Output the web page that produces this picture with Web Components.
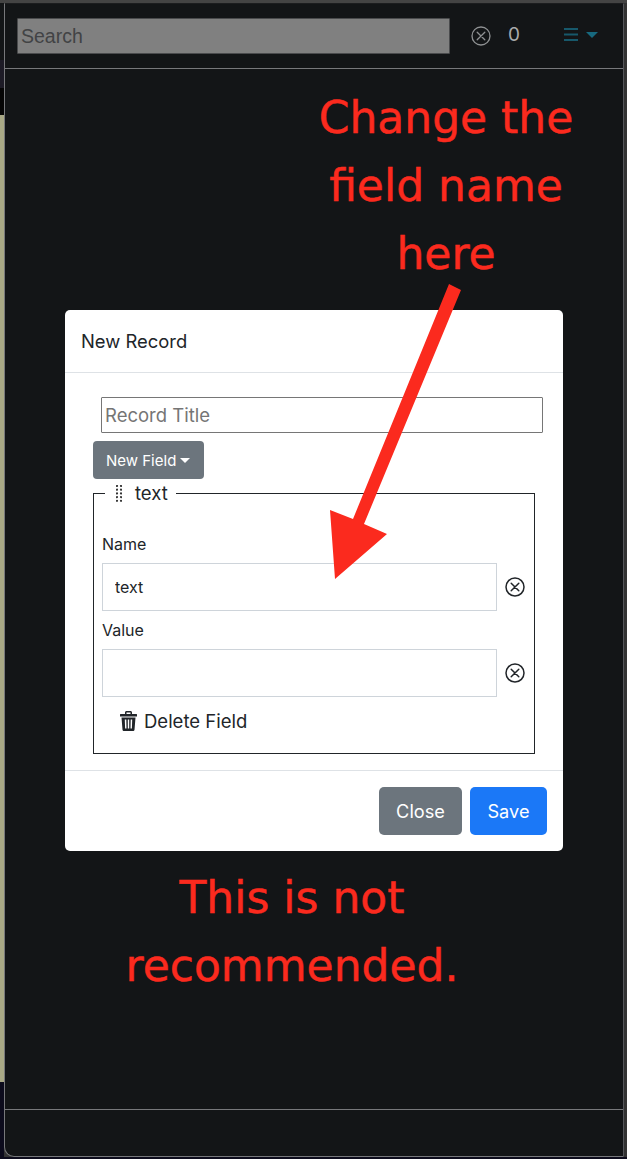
<!DOCTYPE html>
<html lang="en">
<head>
<meta charset="utf-8">
<title>New Record</title>
<style>
  html, body { margin: 0; height: 100%; background: #0c0b1c; }
  body { font-family: Inter, "Liberation Sans", sans-serif; overflow: hidden; }
</style>
</head>
<body>
<app-window>
  <search-bar slot="header"></search-bar>
  <record-modal slot="modal" heading="New Record">
    <field-box legend="text">
      <field-row label="Name" value="text"></field-row>
      <field-row label="Value"></field-row>
    </field-box>
  </record-modal>
  <red-note slot="notes" style="left:264px;top:84px;width:364px">Change the<br>field name<br>here</red-note>
  <red-note slot="notes" style="left:92px;top:864px;width:400px">This is not<br>recommended.</red-note>
  <red-arrow slot="notes"></red-arrow>
</app-window>

<script>
const closeIcon = (size, colour, width) => `
  <svg width="${size}" height="${size}" viewBox="0 0 20 20" fill="none" stroke="${colour}" stroke-width="${width}">
    <circle cx="10" cy="10" r="9"/>
    <path d="M6.2 6.2l7.6 7.6M13.8 6.2l-7.6 7.6" stroke-linecap="round"/>
  </svg>`;

class AppWindow extends HTMLElement {
  constructor() {
    super();
    this.attachShadow({ mode: 'open' }).innerHTML = `
      <style>
        :host { display: block; position: relative; height: 1159px; box-sizing: border-box; padding: 3px 3px 2px 4px;
          background:
            linear-gradient(#444 0 3px, transparent 3px),
            linear-gradient(to top, #0c0b1c 0 2px, transparent 2px),
            linear-gradient(#131517 0 60px, #1d1b26 60px 88px, #050505 88px 115px, #a9a986 115px 1082px, #0c0b1c 1082px) left / 4px 100% no-repeat,
            #333; }
        .frame { height: 100%; box-sizing: border-box; display: flex; flex-direction: column; background: #131517;
          border: 1px solid #77787b; border-top-color: #1c1d1f; border-right-color: #55565a; border-radius: 0 0 0 10px; }
        header { height: 64px; flex: none; border-bottom: 1px solid #77787b; }
        main { flex: 1; }
        footer { height: 46px; flex: none; border-top: 1px solid #77787b; }
        .overlay { position: absolute; left: 65px; top: 310px; width: 498px; }
      </style>
      <div class="frame">
        <header><slot name="header"></slot></header>
        <main></main>
        <footer></footer>
      </div>
      <div class="overlay"><slot name="modal"></slot></div>
      <slot name="notes"></slot>`;
  }
}

class SearchBar extends HTMLElement {
  constructor() {
    super();
    this.attachShadow({ mode: 'open' }).innerHTML = `
      <style>
        :host { display: flex; align-items: center; height: 64px; padding: 0 0 0 12px; box-sizing: border-box; color: #a9abad; }
        input { width: 433px; height: 36px; box-sizing: border-box; margin: 0; padding: 0 3px; background: #808080;
          border: 1px solid #4a4b4d; font: 19.5px "Liberation Sans", Arial, sans-serif; border-radius: 1px; }
        input::placeholder { color: #424345; opacity: 1; }
        .close { display: flex; margin-left: 21px; }
        .count { margin-left: 17px; width: 12px; font-size: 19px; margin-top: -4px; color: #a8aaac; }
        .menu { display: flex; align-items: center; gap: 8px; margin-left: 44px; margin-top: -3px; }
      </style>
      <input placeholder="Search">
      <span class="close">${closeIcon(20, '#8f9193', 1.3)}</span>
      <span class="count">0</span>
      <span class="menu">
        <svg width="14" height="13" viewBox="0 0 14 13" fill="#17586b"><rect y="0" width="14" height="2"/><rect y="5.500" width="14" height="2"/><rect y="11" width="14" height="2"/></svg>
        <svg width="12" height="6" viewBox="0 0 12 6" fill="#17697f"><path d="M0 0h12L6 6z"/></svg>
      </span>`;
  }
}

class RecordModal extends HTMLElement {
  constructor() {
    super();
    this.attachShadow({ mode: 'open' }).innerHTML = `
      <style>
        :host { background: #fff; border-radius: 5px; color: #212529; height: 541px; box-sizing: border-box;
          display: flex; flex-direction: column; }
        .top { height: 63px; flex: none; box-sizing: border-box; border-bottom: 1px solid #dee2e6; padding: 0 16px; display: flex; align-items: center;
          font-size: 18.400px; }
        .body { flex: 1; padding: 24px 28px 0; }
        .title { display: block; width: 442px; height: 36px; margin: 0 0 8px 8px; box-sizing: border-box; padding: 0 3px;
          border: 1px solid #767676; font: 18.500px Inter, "Liberation Sans", sans-serif; border-radius: 1px; }
        .title::placeholder { color: #757575; opacity: 1; }
        .new { display: inline-flex; align-items: center; gap: 4px; height: 38px; width: 111px; box-sizing: border-box; padding: 0 13px; background: #6c757d;
          color: #fff; border-radius: 4px; font-size: 15px; }
        .new i { border-top: 5px solid #fff; border-left: 5px solid transparent; border-right: 5px solid transparent; }
        .bottom { height: 81px; flex: none; box-sizing: border-box; border-top: 1px solid #dee2e6; padding: 16px; display: flex; justify-content: flex-end; gap: 8px; }
        .bottom span { display: flex; align-items: center; justify-content: center; height: 48px; color: #fff; border-radius: 5px; font-size: 18.200px; }
        .close { width: 83px; background: #6c757d; }
        .save { width: 77px; background: #1b78f7; }
      </style>
      <div class="top">${this.getAttribute('heading')}</div>
      <div class="body">
        <input class="title" placeholder="Record Title">
        <span class="new">New Field<i></i></span>
        <slot></slot>
      </div>
      <div class="bottom"><span class="close">Close</span><span class="save">Save</span></div>`;
  }
}

class FieldBox extends HTMLElement {
  constructor() {
    super();
    let dots = '';
    for (let y = 0; y < 5; y++) for (let x = 0; x < 2; x++) dots += `<circle cx="${1 + x * 4}" cy="${1 + y * 3.700}" r="1.100"/>`;
    this.attachShadow({ mode: 'open' }).innerHTML = `
      <style>
        :host { display: block; margin-top: 3px; }
        fieldset { margin: 0; padding: 28px 8px 0; height: 272px; width: 442px; box-sizing: border-box; border: 1px solid #212529; }
        legend { margin-left: 3px; padding: 0 8px 0 11px; font-size: 18.500px; display: flex; align-items: center; gap: 13px; line-height: 22px; }
        .del { display: flex; align-items: center; gap: 7px; margin: 13px 0 0 18px; font-size: 18.500px; }
      </style>
      <fieldset>
        <legend>
          <svg width="6" height="17" viewBox="0 0 6 17" fill="#333"><g>${dots}</g></svg>
          <span>${this.getAttribute('legend')}</span>
        </legend>
        <slot></slot>
        <div class="del">
          <svg width="17" height="20" viewBox="0 0 17 20" fill="#212529">
            <path fill-rule="evenodd" d="M5 3V1.500C5 .700 5.700 0 6.500 0h4c.800 0 1.500.700 1.500 1.500V3h4.500c.300 0 .500.200.500.500V5.500H0V3.500c0-.300.200-.500.500-.500zM6.500 3h4V1.500h-4z"/>
            <path fill-rule="evenodd" d="M1.500 6.500h14l-1 12.200c-.100.800-.700 1.300-1.500 1.300H4c-.800 0-1.400-.500-1.500-1.300zM4.800 8.500l.3 9h1.400l-.2-9zM7.800 8.500v9h1.400v-9zM10.700 8.500l-.2 9h1.400l.3-9z"/>
          </svg>
          <span>Delete Field</span>
        </div>
      </fieldset>`;
  }
}

class FieldRow extends HTMLElement {
  constructor() {
    super();
    this.attachShadow({ mode: 'open' }).innerHTML = `
      <style>
        :host { display: block; color: #212529; margin-bottom: 7px; }
        label { display: block; font-size: 16px; line-height: 24px; margin-bottom: 7px; }
        .line { display: flex; align-items: center; gap: 8px; }
        input { width: 395px; height: 48px; box-sizing: border-box; padding: 0 12px; border: 1px solid #ced4da; font: 16px Inter, "Liberation Sans", sans-serif; color: #212529; }
        svg { display: block; }
      </style>
      <label>${this.getAttribute('label')}</label>
      <div class="line">
        <input value="${this.getAttribute('value') || ''}">
        ${closeIcon(20, '#212529', 1.5)}
      </div>`;
  }
}

class RedNote extends HTMLElement {
  constructor() {
    super();
    this.attachShadow({ mode: 'open' }).innerHTML = `
      <style>
        :host { display: block; position: absolute; color: #fb2a1e; text-align: center; font: 44px/68px "DejaVu Sans", sans-serif; -webkit-text-stroke: .5px #fb2a1e; }
      </style>
      <slot></slot>`;
  }
}

class RedArrow extends HTMLElement {
  constructor() {
    super();
    this.attachShadow({ mode: 'open' }).innerHTML = `
      <style>
        :host { display: block; position: absolute; left: 320px; top: 275px; }
        svg { display: block; }
      </style>
      <svg width="150" height="310" viewBox="320 275 150 310" fill="#fb2a1e">
        <path d="M449 284L461 290L364 524L387 534L335 579L330 510L353 519Z"/>
      </svg>`;
  }
}

customElements.define('app-window', AppWindow);
customElements.define('search-bar', SearchBar);
customElements.define('record-modal', RecordModal);
customElements.define('field-box', FieldBox);
customElements.define('field-row', FieldRow);
customElements.define('red-note', RedNote);
customElements.define('red-arrow', RedArrow);
</script>
</body>
</html>
